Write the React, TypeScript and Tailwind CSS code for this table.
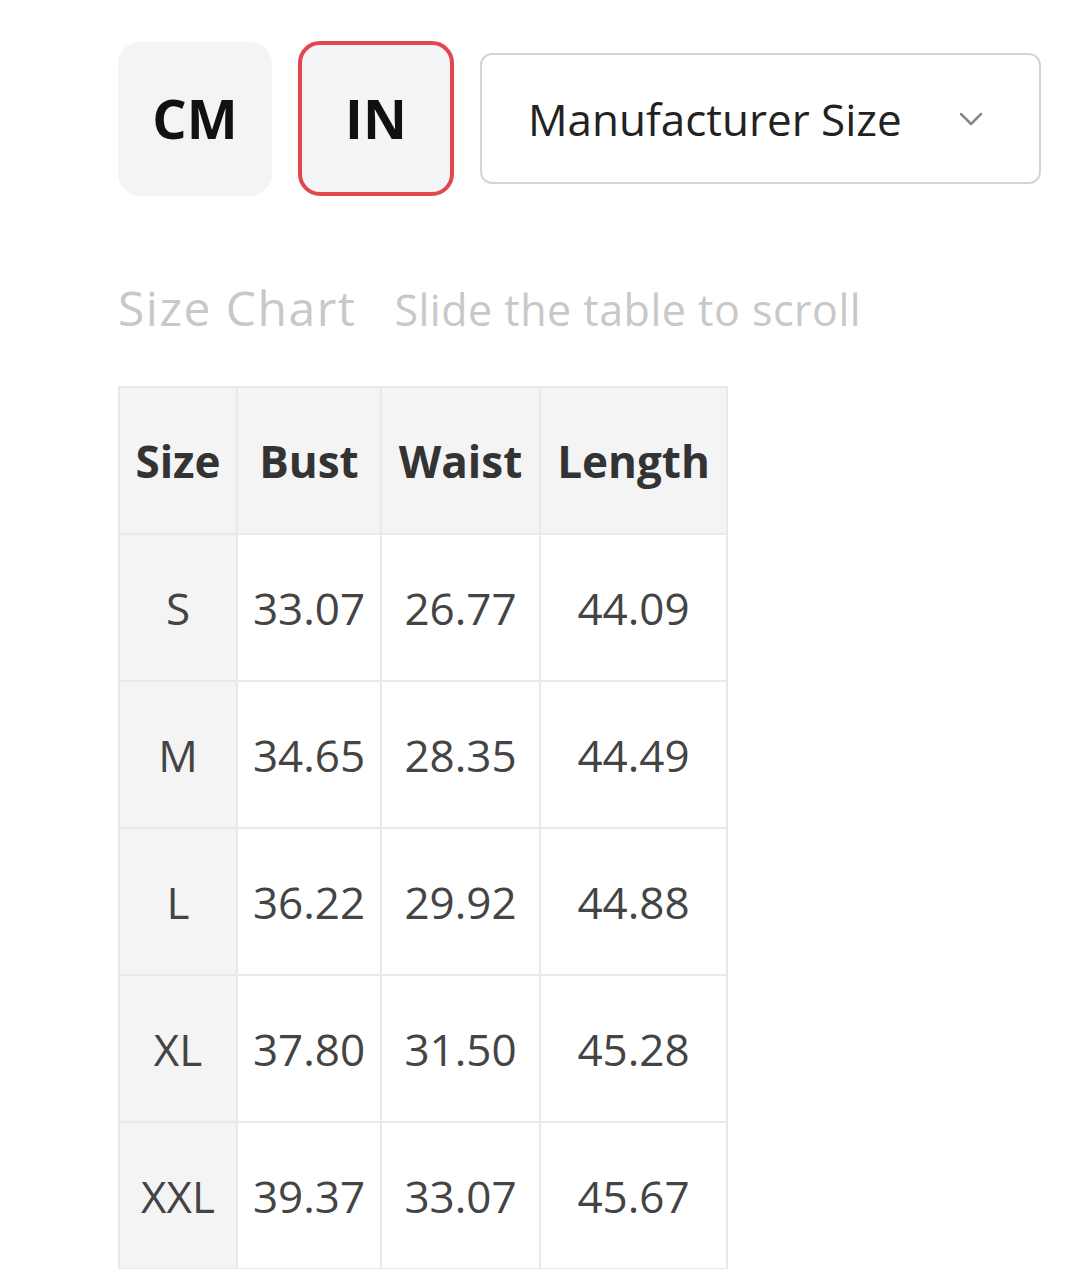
import { ChevronDown } from "lucide-react";

const rows = [
  { size: "S", bust: "33.07", waist: "26.77", length: "44.09" },
  { size: "M", bust: "34.65", waist: "28.35", length: "44.49" },
  { size: "L", bust: "36.22", waist: "29.92", length: "44.88" },
  { size: "XL", bust: "37.80", waist: "31.50", length: "45.28" },
  { size: "XXL", bust: "39.37", waist: "33.07", length: "45.67" },
];

const cols = ["w-[118px]", "w-[144px]", "w-[159px]", "w-[187px]"];

export default function App() {
  return (
    <div
      className="w-[1080px] h-[1269px] overflow-hidden bg-white pl-[118px]"
      style={{ fontFamily: '"Open Sans", "Noto Sans", sans-serif' }}
    >
      <div className="flex items-center gap-[26px] pt-[41px]">
        <button className="w-[154px] h-[154px] rounded-[22px] bg-[#f4f4f4] text-[54px] font-bold text-[#111] flex items-center justify-center">
          CM
        </button>
        <button className="w-[156px] h-[155px] rounded-[22px] bg-[#f4f5f7] border-[4px] border-[#e2474e] text-[54px] font-bold text-[#111] flex items-center justify-center">
          IN
        </button>
        <div className="w-[561px] h-[131px] rounded-[12px] border-2 border-[#d4d4d4] flex items-center justify-between pl-[46px] pr-[48px]">
          <span className="text-[44px] text-[#222]">Manufacturer Size</span>
          <ChevronDown className="w-[40px] h-[40px] text-[#888]" strokeWidth={1.5} />
        </div>
      </div>

      <div className="flex items-baseline gap-[38px] mt-[76px] text-[#c8c8c8]">
        <span className="text-[48px] tracking-[1.5px]">Size Chart</span>
        <span className="text-[43px] tracking-[0.5px]">Slide the table to scroll</span>
      </div>

      <table className="mt-[42px] border-collapse">
        <thead>
          <tr className="h-[147px] bg-[#f4f4f4]">
            {["Size", "Bust", "Waist", "Length"].map((h, i) => (
              <th
                key={h}
                className={`${cols[i]} border-2 border-[#e9e9e9] text-[44px] font-bold text-[#333] text-center`}
              >
                {h}
              </th>
            ))}
          </tr>
        </thead>
        <tbody>
          {rows.map((r) => (
            <tr key={r.size} className="h-[147px]">
              <td className="border-2 border-[#e9e9e9] bg-[#f4f4f4] text-[44px] text-[#444] text-center">
                {r.size}
              </td>
              <td className="border-2 border-[#e9e9e9] text-[44px] text-[#444] text-center">{r.bust}</td>
              <td className="border-2 border-[#e9e9e9] text-[44px] text-[#444] text-center">{r.waist}</td>
              <td className="border-2 border-[#e9e9e9] text-[44px] text-[#444] text-center">{r.length}</td>
            </tr>
          ))}
        </tbody>
      </table>
    </div>
  );
}
